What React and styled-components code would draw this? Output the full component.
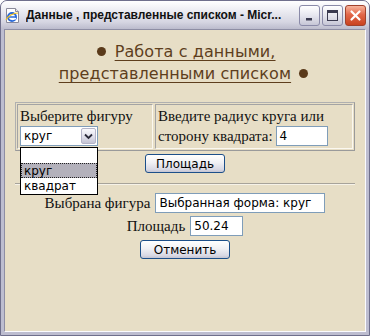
import React from 'react';
import styled, {createGlobalStyle} from 'styled-components';

const GlobalStyle = createGlobalStyle`
  html, body {
    margin: 0;
    padding: 0;
    background: #fff;
  }
  * {
    box-sizing: border-box;
  }
`;

const Window = styled.div`
  width: 370px;
  height: 336px;
  display: flex;
  flex-direction: column;
  background: #bdbdd0;
  border: 1px solid #6f6f8c;
  border-radius: 7px 7px 0 0;
  overflow: hidden;
`;

const TitleBar = styled.div`
  height: 28px;
  display: flex;
  align-items: center;
  padding: 0 3px 0 3px;
  background: linear-gradient(#ffffff 0%, #ececf2 35%, #d6d6e2 75%, #bcbccd 100%);
`;

const TitleText = styled.span`
  flex: 1;
  margin-left: 5px;
  font-family: "Liberation Sans", Arial, sans-serif;
  font-weight: bold;
  font-size: 12px;
  color: #111;
  white-space: nowrap;
  overflow: hidden;
`;

const CaptionButton = styled.div`
  width: 21px;
  height: 21px;
  margin-left: 2px;
  border-radius: 3px;
  border: 1px solid ${p => p.$close ? '#a0412c' : '#8a8aa8'};
  background: ${p => p.$close
    ? 'linear-gradient(#f7b49c, #e2674a 45%, #c9421f)'
    : 'linear-gradient(#ffffff, #e6e6ef 50%, #c6c6d6)'};
  display: flex;
  align-items: center;
  justify-content: center;
`;

const Client = styled.div`
  flex: 1;
  margin: 0 3px 3px 3px;
  background: #e7dec6;
  border: 1px solid;
  border-color: #8e8ea4 #fbfbff #fbfbff #8e8ea4;
  position: relative;
`;

const Heading = styled.div`
  margin-top: 11px;
  text-align: center;
  font-family: "DejaVu Sans", Verdana, sans-serif;
  font-size: 16px;
  letter-spacing: 0.1px;
  line-height: 22px;
  color: #5e3e1d;
`;

const HeadingLink = styled.span`
  text-decoration: underline;
  text-underline-offset: 3px;
`;

const Dot = styled.span`
  display: inline-block;
  width: 9px;
  height: 9px;
  border-radius: 50%;
  background: #5a3a1a;
  vertical-align: 1px;
  margin: 0 3px;
`;

const Panel = styled.div`
  width: 340px;
  margin: 17px auto 0;
  display: grid;
  grid-template-columns: 136px 1fr;
  gap: 2px;
  padding: 1px;
  border: 1px solid;
  border-color: #b0b0b0 #9a9a9a #9a9a9a #b0b0b0;
  font-family: "Liberation Serif", "Times New Roman", serif;
  font-size: 15px;
  color: #111;
`;

const Cell = styled.div`
  border: 1px solid;
  border-color: #a4a4a4 #fbf8f0 #fbf8f0 #a4a4a4;
  padding: 1px 2px 2px 2px;
`;

const Line = styled.div`
  height: 20px;
  line-height: 20px;
  display: flex;
  align-items: center;
  white-space: nowrap;
`;

const SelectWrap = styled.div`
  position: relative;
  width: 78px;
  height: 20px;
`;

const SelectBox = styled.div`
  width: 100%;
  height: 100%;
  border: 1px solid #7f9db9;
  background: #fff;
  display: flex;
  align-items: center;
  padding: 0 1px 0 3px;
  font-family: "DejaVu Sans", Tahoma, sans-serif;
  font-size: 12px;
  color: #000;
`;

const SelectValue = styled.span`
  flex: 1;
`;

const SelectArrow = styled.div`
  width: 15px;
  height: 16px;
  border: 1px solid #b4b4c8;
  border-radius: 2px;
  background: linear-gradient(#fafafd, #dcdce8 60%, #c4c4d4);
  display: flex;
  align-items: center;
  justify-content: center;
`;

const DropList = styled.div`
  position: absolute;
  top: 21px;
  left: 0;
  width: 78px;
  border: 1px solid #000;
  background: #fff;
  font-family: "DejaVu Sans", Tahoma, sans-serif;
  font-size: 12px;
  color: #000;
  z-index: 5;
`;

const Option = styled.div`
  height: ${p => p.$h || 15}px;
  line-height: 13px;
  padding: 1px 2px;
  background: ${p => p.$selected ? '#b3b1bb' : '#fff'};
  border: 1px dotted ${p => p.$selected ? '#222' : 'transparent'};
`;

const TextInput = styled.div`
  width: ${p => p.$w}px;
  height: 20px;
  border: 1px solid #7f9db9;
  background: #fff;
  font-family: "DejaVu Sans", Tahoma, sans-serif;
  font-size: 12px;
  line-height: 18px;
  color: #000;
  padding: 0 3px;
  margin-left: ${p => p.$ml || 0}px;
  white-space: nowrap;
`;

const ButtonRow = styled.div`
  display: flex;
  justify-content: center;
  margin-top: ${p => p.$mt}px;
`;

const Button = styled.div`
  width: ${p => p.$w}px;
  height: 19px;
  border: 1px solid #1c4f8a;
  border-radius: 3px;
  background: linear-gradient(#ffffff, #f0f0f4 45%, #d8d8e4 85%, #c4c4d2);
  font-family: "DejaVu Sans", Tahoma, sans-serif;
  font-size: 12px;
  color: #000;
  display: flex;
  align-items: center;
  justify-content: center;
`;

const Rule = styled.div`
  width: 340px;
  margin: 10px auto 0;
  border-top: 1px solid #a7a39a;
  border-bottom: 1px solid #f6f2e8;
`;

const FormRow = styled.div`
  display: flex;
  justify-content: center;
  align-items: center;
  gap: 5px;
  margin-top: ${p => p.$mt}px;
  font-family: "Liberation Serif", "Times New Roman", serif;
  font-size: 15px;
  color: #111;
`;

const IEIcon = () => (
    <svg width="17" height="17" viewBox="0 0 17 17">
        <path d="M2.5 1.5h9l3 3v11h-12z" fill="#fff" stroke="#8a8a9a"/>
        <path d="M11.5 1.5v3h3" fill="#e8e8f0" stroke="#8a8a9a"/>
        <circle cx="8" cy="10" r="4" fill="none" stroke="#2a6ad8" strokeWidth="2"/>
        <path d="M4.5 10h7" stroke="#2a6ad8" strokeWidth="1.6"/>
        <path d="M12 11.5l-4 1" stroke="#fff" strokeWidth="1.6"/>
        <path d="M2 13c2-4 7-7 12-7" fill="none" stroke="#f0c020" strokeWidth="1.2"/>
    </svg>
);

const Chevron = () => (
    <svg width="9" height="7" viewBox="0 0 9 7">
        <path d="M1 1.5l3.5 3.5 3.5-3.5" fill="none" stroke="#2a2a3a" strokeWidth="1.8"/>
    </svg>
);

const App = () => (
    <>
        <GlobalStyle/>
        <Window>
            <TitleBar>
                <IEIcon/>
                <TitleText>Данные , представленные списком - Micr...</TitleText>
                <CaptionButton>
                    <svg width="13" height="13" viewBox="0 0 13 13">
                        <rect x="3" y="9" width="6" height="2.5" fill="#3a3a50"/>
                    </svg>
                </CaptionButton>
                <CaptionButton>
                    <svg width="13" height="13" viewBox="0 0 13 13">
                        <rect x="1.5" y="1.5" width="10" height="10" fill="none" stroke="#3a3a50" strokeWidth="1"/>
                        <rect x="1.5" y="1.5" width="10" height="2.5" fill="#3a3a50"/>
                    </svg>
                </CaptionButton>
                <CaptionButton $close>
                    <svg width="13" height="13" viewBox="0 0 13 13">
                        <path d="M2.5 2.5l8 8M10.5 2.5l-8 8" stroke="#fff" strokeWidth="2.2" strokeLinecap="round"/>
                    </svg>
                </CaptionButton>
            </TitleBar>
            <Client>
                <Heading>
                    <Dot/> <HeadingLink>Работа с данными,</HeadingLink>
                    <br/>
                    <HeadingLink>представленными списком</HeadingLink> <Dot/>
                </Heading>
                <Panel>
                    <Cell>
                        <Line>Выберите фигуру</Line>
                        <SelectWrap>
                            <SelectBox>
                                <SelectValue>круг</SelectValue>
                                <SelectArrow><Chevron/></SelectArrow>
                            </SelectBox>
                            <DropList>
                                <Option/>
                                <Option $selected>круг</Option>
                                <Option $h={16}>квадрат</Option>
                            </DropList>
                        </SelectWrap>
                    </Cell>
                    <Cell>
                        <Line>Введите радиус круга или</Line>
                        <Line>сторону квадрата: <TextInput $w={52} $ml={3}>4</TextInput></Line>
                    </Cell>
                </Panel>
                <ButtonRow $mt={3}>
                    <Button $w={80}>Площадь</Button>
                </ButtonRow>
                <Rule/>
                <FormRow $mt={8}>
                    Выбрана фигура
                    <TextInput $w={170}>Выбранная форма: круг</TextInput>
                </FormRow>
                <FormRow $mt={3}>
                    Площадь
                    <TextInput $w={53}>50.24</TextInput>
                </FormRow>
                <ButtonRow $mt={4}>
                    <Button $w={90}>Отменить</Button>
                </ButtonRow>
            </Client>
        </Window>
    </>
);

export default App;
